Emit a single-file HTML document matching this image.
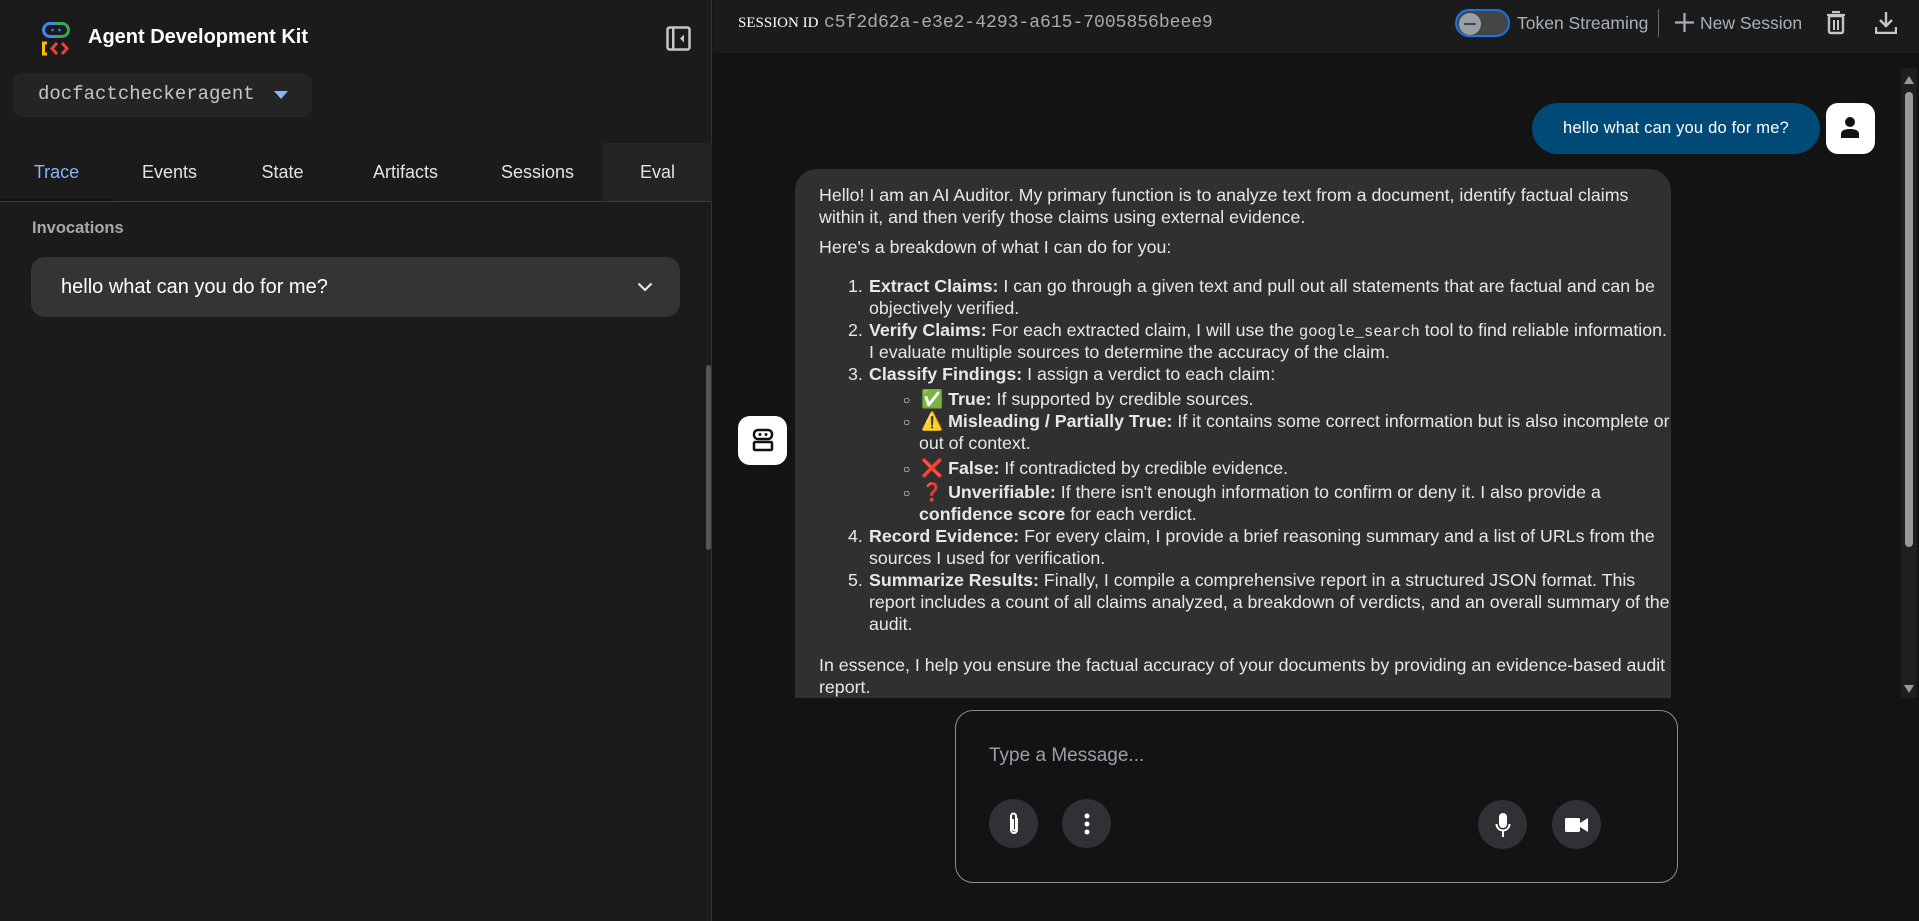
<!DOCTYPE html>
<html><head><meta charset="utf-8"><style>
*{box-sizing:border-box;margin:0;padding:0}
body{width:1919px;height:921px;overflow:hidden;background:#131314;font-family:"Liberation Sans",sans-serif;color:#e3e3e3;position:relative}
.abs{position:absolute}
#side{left:0;top:0;width:712px;height:921px;background:#1b1b1b;border-right:1px solid #333}
.tab{position:absolute;top:143px;height:58px;line-height:58px;font-size:18px;color:#e3e3e3;text-align:center}
#bubble{left:795px;top:169px;width:876px;height:529px;background:#303030;border-radius:22px 22px 0 0;overflow:hidden}
.ln{position:absolute;font-size:17.8px;line-height:22px;white-space:nowrap;color:#e8e8e8}
.ln b{font-weight:bold}
.bl{position:absolute;font-size:12px;line-height:22px;color:#e8e8e8}
.circ{position:absolute;width:49px;height:49px;border-radius:50%;background:#303134;display:flex;align-items:center;justify-content:center}
</style></head><body>
<div id="side" class="abs">
  <svg class="abs" style="left:40px;top:22px" width="32" height="34" viewBox="0 0 32 34">
    <path d="M16 1.5 H22 A6.5 6.5 0 0 1 22 14.5 H16" stroke="#34a853" stroke-width="3" fill="none"/>
    <path d="M16 1.5 H10 A6.5 6.5 0 0 0 10 14.5 H16" stroke="#4285f4" stroke-width="3" fill="none"/>
    <circle cx="12.5" cy="8" r="1.3" fill="#4285f4"/><circle cx="19.5" cy="8" r="1.3" fill="#4285f4"/>
    <path d="M7 21 H3.5 V32 H7" stroke="#fbbc04" stroke-width="3" fill="none"/>
    <path d="M17 21 L12 26.5 L17 32 M22 21 L27 26.5 L22 32" stroke="#ea4335" stroke-width="3" fill="none"/>
  </svg>
  <div class="abs" style="left:88px;top:24px;font-size:20px;font-weight:bold;color:#fff;line-height:26px">Agent Development Kit</div>
  <svg class="abs" style="left:666px;top:26px" width="25" height="25" viewBox="0 0 25 25"><rect x="1.5" y="1.5" width="22" height="22" rx="2" fill="none" stroke="#c4c7c5" stroke-width="2.5"/><rect x="6" y="2" width="2.5" height="21" fill="#c4c7c5"/><path d="M18 8.5 L14 12.5 L18 16.5Z" fill="#c4c7c5"/></svg>
  <div class="abs" style="left:13px;top:73px;width:299px;height:44px;background:#242424;border-radius:10px"></div>
  <div class="abs" style="left:38px;top:81px;font-family:'Liberation Mono',monospace;font-size:19px;color:#c4c7c5;line-height:26px">docfactcheckeragent</div>
  <svg class="abs" style="left:274px;top:91px" width="14" height="8"><path d="M0 0H14L7 8Z" fill="#8ab4f8"/></svg>
  <div class="abs" style="left:603px;top:143px;width:109px;height:58px;background:#242424"></div>
  <div class="tab" style="left:0;width:113px;color:#8ab4f8">Trace</div>
  <div class="tab" style="left:113px;width:113px">Events</div>
  <div class="tab" style="left:226px;width:113px">State</div>
  <div class="tab" style="left:339px;width:133px">Artifacts</div>
  <div class="tab" style="left:472px;width:131px">Sessions</div>
  <div class="tab" style="left:603px;width:109px">Eval</div>
  <div class="abs" style="left:0;top:201px;width:712px;height:1px;background:#3c3c3c"></div>
  <div class="abs" style="left:0;top:199px;width:113px;height:2px;background:#111"></div>
  <div class="abs" style="left:32px;top:219px;font-size:16.5px;font-weight:bold;color:#a8a8a8">Invocations</div>
  <div class="abs" style="left:31px;top:257px;width:649px;height:60px;background:#333436;border-radius:14px"></div>
  <div class="abs" style="left:61px;top:272px;font-size:20px;color:#fff;line-height:30px">hello what can you do for me?</div>
  <svg class="abs" style="left:637px;top:282px" width="16" height="10"><path d="M1.5 1.5L8 8L14.5 1.5" stroke="#e3e3e3" stroke-width="2.2" fill="none"/></svg>
  <div class="abs" style="left:706px;top:365px;width:5px;height:185px;background:#555;border-radius:3px"></div>
</div>
<div class="abs" style="left:713px;top:0;width:1206px;height:53px;background:#1b1b1b"></div>
<div class="abs" style="left:738px;top:13px;font-family:'Liberation Serif',serif;font-size:15px;color:#fff;line-height:20px">SESSION ID</div>
<div class="abs" style="left:824px;top:11px;font-family:'Liberation Mono',monospace;font-size:18px;color:#aaa;line-height:24px">c5f2d62a-e3e2-4293-a615-7005856beee9</div>
<div class="abs" style="left:1455px;top:9px;width:55px;height:28px;border-radius:14px;background:#444;border:2px solid #1a73e8"></div>
<div class="abs" style="left:1459px;top:13px;width:22px;height:22px;border-radius:50%;background:#9aa0a6"></div>
<div class="abs" style="left:1464px;top:23px;width:12px;height:2px;background:#444"></div>
<div class="abs" style="left:1517px;top:11px;font-size:17.5px;line-height:24px;color:#a8b0b8">Token Streaming</div>
<div class="abs" style="left:1658px;top:9px;width:1px;height:28px;background:#666"></div>
<svg class="abs" style="left:1675px;top:13px" width="19" height="19"><path d="M9.5 0V19M0 9.5H19" stroke="#a8b0b8" stroke-width="2.2"/></svg>
<div class="abs" style="left:1700px;top:11px;font-size:17.5px;color:#a8b0b8;line-height:24px">New Session</div>
<svg class="abs" style="left:1826px;top:11px" width="20" height="24" viewBox="0 0 20 24"><path d="M6 1H14M1 4H19" stroke="#c4c7c5" stroke-width="2.2"/><rect x="3" y="5" width="14" height="17" rx="1.5" fill="none" stroke="#c4c7c5" stroke-width="2.4"/><path d="M8 9V19M12 9V19" stroke="#c4c7c5" stroke-width="2"/></svg>
<svg class="abs" style="left:1875px;top:12px" width="22" height="22" viewBox="0 0 22 22"><path d="M11 0V13M5 8L11 14L17 8" stroke="#c4c7c5" stroke-width="2.4" fill="none"/><path d="M1 15V21H21V15" stroke="#c4c7c5" stroke-width="2.4" fill="none"/></svg>

<div class="abs" style="left:1532px;top:103px;width:288px;height:51px;background:#004a77;border-radius:26px"></div>
<div class="abs" style="left:1532px;top:103px;width:288px;height:51px;line-height:51px;text-align:center;font-size:16.5px;color:#fff;letter-spacing:0.2px">hello what can you do for me?</div>
<div class="abs" style="left:1826px;top:103px;width:49px;height:51px;background:#fff;border-radius:12px"></div>
<svg class="abs" style="left:1840px;top:116px" width="20" height="22"><circle cx="10" cy="6" r="5" fill="#111"/><path d="M1 22V18Q1 13 10 13Q19 13 19 18V22Z" fill="#111"/></svg>
<div class="abs" style="left:738px;top:416px;width:49px;height:49px;background:#fff;border-radius:12px"></div>
<svg class="abs" style="left:752px;top:428px" width="22" height="25"><rect x="2" y="2" width="18" height="9" rx="4" fill="none" stroke="#111" stroke-width="2.5"/><circle cx="8" cy="6.5" r="1.5" fill="#111"/><circle cx="14" cy="6.5" r="1.5" fill="#111"/><rect x="2" y="14" width="18" height="8" rx="1" fill="none" stroke="#111" stroke-width="2.5"/></svg>

<div id="bubble" class="abs">
<div class="ln" style="left:24px;top:15px">Hello! I am an AI Auditor. My primary function is to analyze text from a document, identify factual claims</div>
<div class="ln" style="left:24px;top:37px">within it, and then verify those claims using external evidence.</div>
<div class="ln" style="left:24px;top:67px">Here's a breakdown of what I can do for you:</div>
<div class="ln" style="left:53px;top:106px">1.</div><div class="ln" style="left:74px;top:106px"><b>Extract Claims:</b> I can go through a given text and pull out all statements that are factual and can be</div>
<div class="ln" style="left:74px;top:128px">objectively verified.</div>
<div class="ln" style="left:53px;top:150px">2.</div><div class="ln" style="left:74px;top:150px"><b>Verify Claims:</b> For each extracted claim, I will use the <span style="font-family:'Liberation Mono',monospace;font-size:15.5px">google_search</span> tool to find reliable information.</div>
<div class="ln" style="left:74px;top:172px">I evaluate multiple sources to determine the accuracy of the claim.</div>
<div class="ln" style="left:53px;top:194px">3.</div><div class="ln" style="left:74px;top:194px"><b>Classify Findings:</b> I assign a verdict to each claim:</div>
<div class="bl" style="left:108px;top:220px">○</div><div class="ln" style="left:126px;top:219px"><span style="color:#5c5">✅</span> <b>True:</b> If supported by credible sources.</div>
<div class="bl" style="left:108px;top:242px">○</div><div class="ln" style="left:126px;top:241px"><span style="color:#fa0">⚠️</span> <b>Misleading / Partially True:</b> If it contains some correct information but is also incomplete or</div>
<div class="ln" style="left:124px;top:263px">out of context.</div>
<div class="bl" style="left:108px;top:289px">○</div><div class="ln" style="left:126px;top:288px"><span style="color:#f45">❌</span> <b>False:</b> If contradicted by credible evidence.</div>
<div class="bl" style="left:108px;top:313px">○</div><div class="ln" style="left:126px;top:312px"><span style="color:#f45">❓</span> <b>Unverifiable:</b> If there isn't enough information to confirm or deny it. I also provide a</div>
<div class="ln" style="left:124px;top:334px"><b>confidence score</b> for each verdict.</div>
<div class="ln" style="left:53px;top:356px">4.</div><div class="ln" style="left:74px;top:356px"><b>Record Evidence:</b> For every claim, I provide a brief reasoning summary and a list of URLs from the</div>
<div class="ln" style="left:74px;top:378px">sources I used for verification.</div>
<div class="ln" style="left:53px;top:400px">5.</div><div class="ln" style="left:74px;top:400px"><b>Summarize Results:</b> Finally, I compile a comprehensive report in a structured JSON format. This</div>
<div class="ln" style="left:74px;top:422px">report includes a count of all claims analyzed, a breakdown of verdicts, and an overall summary of the</div>
<div class="ln" style="left:74px;top:444px">audit.</div>
<div class="ln" style="left:24px;top:485px">In essence, I help you ensure the factual accuracy of your documents by providing an evidence-based audit</div>
<div class="ln" style="left:24px;top:507px">report.</div>
</div>
<div class="abs" style="left:1901px;top:68px;width:16px;height:630px;background:#1e1e1e"></div>
<div class="abs" style="left:1905px;top:92px;width:8px;height:455px;background:#9a9a9a;border-radius:4px"></div>
<svg class="abs" style="left:1904px;top:76px" width="10" height="8"><path d="M5 0L10 8H0Z" fill="#9a9a9a"/></svg>
<svg class="abs" style="left:1904px;top:685px" width="10" height="8"><path d="M0 0H10L5 8Z" fill="#9a9a9a"/></svg>

<div class="abs" style="left:955px;top:710px;width:723px;height:173px;border:1px solid #8e8e8e;border-radius:18px"></div>
<div class="abs" style="left:989px;top:743px;font-size:19px;color:#9aa0a6;line-height:26px">Type a Message...</div>
<div class="circ" style="left:989px;top:799px"><svg width="14" height="26" viewBox="0 0 14 26"><path d="M10 7V19A3 3 0 0 1 4 19V5A2.5 2.5 0 0 1 9 5V18A1.5 1.5 0 0 1 6 18V8" stroke="#fff" stroke-width="2" fill="none"/></svg></div>
<div class="circ" style="left:1062px;top:799px"><svg width="6" height="22"><circle cx="3" cy="3" r="2.5" fill="#fff"/><circle cx="3" cy="11" r="2.5" fill="#fff"/><circle cx="3" cy="19" r="2.5" fill="#fff"/></svg></div>
<div class="circ" style="left:1478px;top:800px"><svg width="16" height="26" viewBox="0 0 16 26"><rect x="4" y="1" width="8" height="15" rx="4" fill="#fff"/><path d="M1.5 12A6.5 6.5 0 0 0 14.5 12M8 19V25" stroke="#fff" stroke-width="2" fill="none"/></svg></div>
<div class="circ" style="left:1552px;top:800px"><svg width="24" height="16"><rect x="0" y="1" width="15" height="14" rx="1.5" fill="#fff"/><path d="M15 6L23 1V15L15 10Z" fill="#fff"/></svg></div>
</body></html>
